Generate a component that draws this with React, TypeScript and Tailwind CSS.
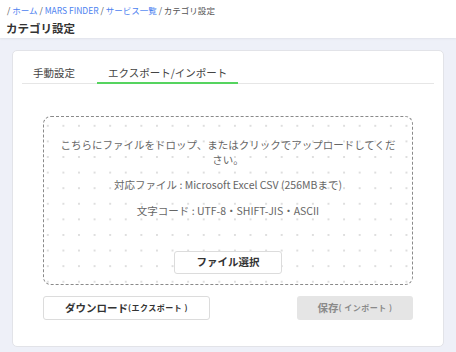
import React from "react";

export default function App() {
  return (
    <div className="w-[456px] h-[352px] overflow-hidden bg-[#eef0f8] font-['Noto_Sans_CJK_JP','Noto_Sans',sans-serif] text-[#333]">
      <header className="h-[38px] bg-white px-[7px] pt-[4px] shadow-[0_1px_2px_rgba(0,0,0,0.06)]">
        <div className="text-[8.5px] leading-[12px] text-[#555] whitespace-nowrap">
          / <span className="text-[#4d82f0]">ホーム</span> /{" "}
          <span className="text-[#4d82f0]">MARS FINDER</span> /{" "}
          <span className="text-[#4d82f0]">サービス一覧</span> / カテゴリ設定
        </div>
        <h1 className="mt-[4px] text-[11.5px] leading-[16px] font-bold text-[#333] -ml-[1px]">カテゴリ設定</h1>
      </header>
      <main className="px-[12px] pt-[12px]">
        <div className="w-[432px] h-[297px] bg-white border border-[#e2e3e8] rounded-[5px] px-[9px] pt-[15px]">
          <div className="flex border-b border-[#e6e6e6] text-[10.5px] leading-[14px] text-[#444]">
            <div className="px-[11px] pb-[1px] border-b-2 border-transparent">手動設定</div>
            <div className="ml-[11px] px-[11px] pb-[1px] border-b-2 border-[#55d45f] -mb-px">エクスポート/インポート</div>
          </div>
          <div className="mx-[21px] mt-[32px]">
            <div className="h-[169px] border border-dashed border-[#8a8a8a] rounded-[8px] px-[14px] pt-[21px] text-center text-[10.5px] leading-[14.5px] text-[#666] bg-[radial-gradient(circle,#dedede_0.9px,transparent_1.3px)] bg-[length:15.6px_15.6px] bg-[position:-4px_1px]">
              <p>こちらにファイルをドロップ、またはクリックでアップロードしてください。</p>
              <p className="mt-[11px]">対応ファイル : Microsoft Excel CSV (256MBまで)</p>
              <p className="mt-[11.5px]">文字コード : UTF-8・SHIFT-JIS・ASCII</p>
              <div className="mt-[32px] flex justify-center">
                <button className="w-[108px] h-[23px] bg-white border border-[#dcdcdc] rounded-[3px] text-[10.5px] font-bold text-[#333]">
                  ファイル選択
                </button>
              </div>
            </div>
            <div className="mt-[11px] flex justify-between">
              <button className="w-[167px] h-[24px] bg-white border border-[#dcdcdc] rounded-[3px] font-bold text-[#333] flex items-center justify-center">
                <span className="text-[10.5px]">ダウンロード</span>
                <span className="text-[8px] tracking-[0.5px]">(エクスポート )</span>
              </button>
              <button className="w-[116px] h-[24px] bg-[#e5e5e5] rounded-[3px] font-bold text-[#8a8a8a] flex items-center justify-center">
                <span className="text-[10.5px]">保存</span>
                <span className="text-[8px] tracking-[0.5px]">( インポート )</span>
              </button>
            </div>
          </div>
        </div>
      </main>
    </div>
  );
}
